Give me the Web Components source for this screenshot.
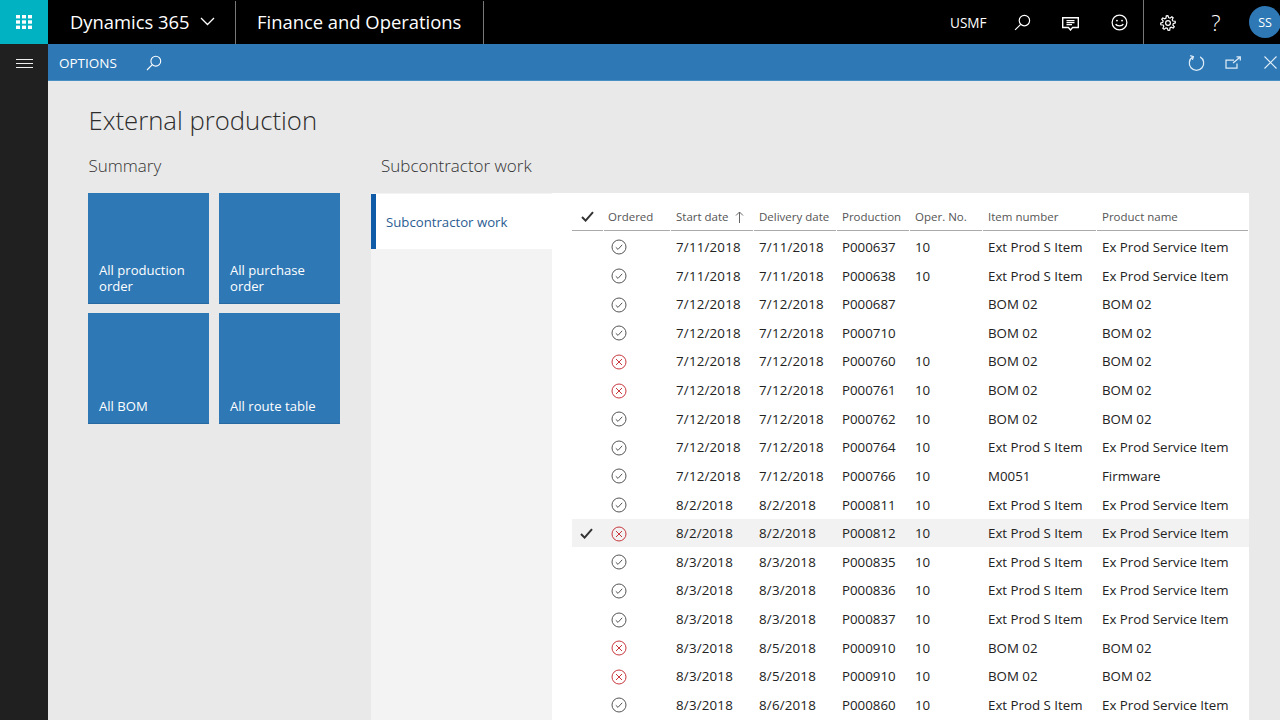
<!DOCTYPE html>
<html lang="en"><head><meta charset="utf-8"><title>External production</title>
<style>
html,body{margin:0;padding:0;height:720px;overflow:hidden;background:#e9e9e9;font-family:"Open Sans","Noto Sans",sans-serif}
</style></head><body>
<d365-app></d365-app>
<script>
const searchIcon=(s,c)=>`<svg width="${s}" height="${s}" viewBox="0 0 16 16" fill="none" stroke="${c}" stroke-width="1.1"><circle cx="9.8" cy="6.2" r="4.9"/><path d="M6.3 9.7 1 15"/></svg>`;
function gearPath(){let d='';const n=8;for(let i=0;i<n;i++){const a=i/n*2*Math.PI-Math.PI/n;const st=2*Math.PI/n;const pts=[[6.6,a],[9.2,a+st*.2],[9.2,a+st*.48],[6.6,a+st*.68]];pts.forEach((p,j)=>{const x=(10+p[0]*Math.cos(p[1])).toFixed(2),y=(10+p[0]*Math.sin(p[1])).toFixed(2);d+=(d?'L':'M')+x+' '+y;});}return d+'Z';}
function def(name,html,init){customElements.define(name,class extends HTMLElement{constructor(){super();this.attachShadow({mode:'open'}).innerHTML=html;}connectedCallback(){if(init)init(this)}});}

def('d365-topbar',`<style>
:host{display:flex;height:44px;background:#000;color:#fff;align-items:stretch;font-size:18.4px}
.tile{width:48px;background:#00b2c2;display:flex;align-items:center;justify-content:center;flex:none}
.seg{display:flex;align-items:center;border-right:1px solid #777;white-space:nowrap;box-sizing:border-box;padding-bottom:2px;margin-top:1px}
.brand{width:188px;padding-left:22px;gap:10px}
.prod{width:248px;padding-left:21px}
.sp{flex:1}
.r{display:flex;align-items:center}
.usmf{font-size:13.6px;width:38px;margin-right:21px;font-weight:400}
.ic{width:48px;height:44px;display:flex;align-items:center;justify-content:center}
.div{width:1px;background:#777;align-self:stretch;margin:0}
.q{font-size:22px;font-weight:300}
.av{width:32px;height:32px;border-radius:50%;background:#2e78b5;font-size:12.5px;display:flex;align-items:center;justify-content:center;margin:0 -1px 0 9px;flex:none}
</style>
<div class="tile"><svg width="16" height="14" viewBox="0 0 16 14" fill="#fff"><rect x="0" y="0" width="4" height="3.4"/><rect x="6" y="0" width="4" height="3.4"/><rect x="12" y="0" width="4" height="3.4"/><rect x="0" y="5.3" width="4" height="3.4"/><rect x="6" y="5.3" width="4" height="3.4"/><rect x="12" y="5.3" width="4" height="3.4"/><rect x="0" y="10.6" width="4" height="3.4"/><rect x="6" y="10.6" width="4" height="3.4"/><rect x="12" y="10.6" width="4" height="3.4"/></svg></div>
<div class="seg brand"><span>Dynamics 365</span><svg width="15" height="9" viewBox="0 0 15 9" fill="none" stroke="#fff" stroke-width="1.3"><path d="M1 1l6.5 6.5L14 1"/></svg></div>
<div class="seg prod"><span>Finance and Operations</span></div>
<div class="sp"></div>
<div class="r"><span class="usmf">USMF</span>
<div class="ic" style="width:26px;margin-right:13px">${searchIcon(17,'#fff')}</div>
<div class="ic" style="width:48px;margin-left:-2px;padding-top:3px"><svg width="17" height="14" viewBox="0 0 17 14" fill="none" stroke="#fff" stroke-width="1.4"><path d="M.7 .7h15.6v9.8H10.6L8.5 13 6.4 10.5H.7z"/><path d="M4.5 3.6h8M4.5 5.6h8M4.5 7.7h5.5" stroke-width="1.2"/></svg></div>
<div class="ic" style="width:48px;margin-left:1px;padding-top:1px"><svg width="17" height="17" viewBox="0 0 18 18" fill="none" stroke="#fff" stroke-width="1.3"><circle cx="9" cy="9" r="7.8"/><circle cx="6.3" cy="7" r="1" fill="#fff" stroke="none"/><circle cx="11.7" cy="7" r="1" fill="#fff" stroke="none"/><path d="M5 10.6c1 2.6 7 2.6 8 0"/></svg></div>
<div class="div"></div>
<div class="ic" style="padding-top:1px"><svg width="16" height="16" viewBox="0 0 20 20" fill="none" stroke="#fff" stroke-width="1.5"><circle cx="10" cy="10" r="3"/><path d="${gearPath()}"/></svg></div>
<div class="ic q">?</div>
<div class="av">SS</div></div>`);

def('d365-actionbar',`<style>
:host{display:flex;height:37px;background:#2e78b5;color:#fff;align-items:center;font-size:13.5px;border-bottom:1px solid #4a8fc4;box-sizing:border-box}
.o{margin-left:11px;width:87px;padding-top:2px}
.sp{flex:1}
.ic{width:37px;display:flex;justify-content:center}
</style>
<span class="o">OPTIONS</span><span style="padding-top:1px;display:flex">${searchIcon(16,'#fff')}</span>
<span class="sp"></span>
<span class="ic" style="margin-right:-1px;padding-left:1px"><svg width="17" height="17" viewBox="0 0 17 17" fill="none" stroke="#dcebf7" stroke-width="1.25"><path d="M4.9 2.9a7.2 7.2 0 1 0 7.2 0"/><path d="M2.2 1.6 5.4 2.7 4.4 5.9"/></svg></span>
<span class="ic" style="width:38px"><svg width="16" height="13" viewBox="0 0 16 13" fill="none" stroke="#dcebf7" stroke-width="1.25"><path d="M9 4H1v8h11V7.5"/><path d="M8 7 15 1.2M11.5 .8h3.8V4.6"/></svg></span>
<span class="ic" style="width:37px;margin-right:-9px"><svg width="13" height="13" viewBox="0 0 13 13" fill="none" stroke="#e6f0f8" stroke-width="1.1"><path d="M.5.5l12 12M12.5.5l-12 12"/></svg></span>`);

def('d365-rail',`<style>
:host{display:flex;flex-direction:column;width:48px;background:#202020;align-items:center;padding-top:15px;box-sizing:border-box;flex:none}
i{display:block;width:17px;height:1px;background:#eee;margin-bottom:3px}
</style><i></i><i></i><i></i>`);

def('d365-tile',`<style>
:host{display:flex;align-items:flex-end;height:110.5px;background:#2e78b5;color:#fff;font-size:13.1px;line-height:16px;padding:0 10px 9px 11px;box-sizing:border-box;border-bottom:1px solid #2769a0}
</style><span><slot></slot></span>`);

def('d365-summary',`<style>
:host{display:block;width:283px;flex:none}
h2{margin:0 0 15px .5px;font:300 17px/24px "Open Sans",sans-serif;color:#333}
.g{display:grid;grid-template-columns:121px 121px;gap:9.5px 10px}
</style><h2>Summary</h2><div class="g"><slot></slot></div>`);

const OK=`<svg width="16" height="16" viewBox="0 0 16 16" fill="none" stroke="#555" stroke-width="1"><circle cx="8" cy="8" r="7"/><path d="M4.8 8.3l2.2 2.1 4.2-4.6"/></svg>`;
const NO=`<svg width="16" height="16" viewBox="0 0 16 16" fill="none" stroke="#c8383f" stroke-width="1"><circle cx="8" cy="8" r="7"/><path d="M5 5l6 6M11 5l-6 6"/></svg>`;
const CK=`<svg width="13" height="11" viewBox="0 0 13 11" fill="none" stroke="#333" stroke-width="2"><path d="M1 6l3.6 3.6L12 1.2"/></svg>`;
const E=['Ext Prod S Item','Ex Prod Service Item'],B=['BOM 02','BOM 02'];
const rows=[
[1,'7/11/2018','7/11/2018','P000637','10',E],[1,'7/11/2018','7/11/2018','P000638','10',E],
[1,'7/12/2018','7/12/2018','P000687','',B],[1,'7/12/2018','7/12/2018','P000710','',B],
[0,'7/12/2018','7/12/2018','P000760','10',B],[0,'7/12/2018','7/12/2018','P000761','10',B],
[1,'7/12/2018','7/12/2018','P000762','10',B],[1,'7/12/2018','7/12/2018','P000764','10',E],
[1,'7/12/2018','7/12/2018','P000766','10',['M0051','Firmware']],[1,'8/2/2018','8/2/2018','P000811','10',E],
[0,'8/2/2018','8/2/2018','P000812','10',E,1],[1,'8/3/2018','8/3/2018','P000835','10',E],
[1,'8/3/2018','8/3/2018','P000836','10',E],[1,'8/3/2018','8/3/2018','P000837','10',E],
[0,'8/3/2018','8/5/2018','P000910','10',B],[0,'8/3/2018','8/5/2018','P000910','10',B],
[1,'8/3/2018','8/6/2018','P000860','10',E]];
const cols='31.5px 67px 83px 83px 73px 73px 114px 152.5px';
def('d365-grid',`<style>
:host{display:block;background:#fff;flex:1;padding:0 0 0 20px;overflow:hidden}
.r{display:grid;grid-template-columns:${cols};height:28.63px;align-items:center;font-size:13.3px;color:#222;white-space:nowrap}
.r.sel{background:#f2f2f2}
.r span{padding-left:5.5px;display:flex;align-items:center;height:100%}
.r span.c{padding:0 0 0 8px}
.r span.n{letter-spacing:.2px}
.h{height:38px;color:#555;font-size:11.5px;margin-bottom:1.6px}
.h span{height:auto;align-self:stretch;box-sizing:border-box;border-bottom:1px solid #aaa;margin-right:1px;padding-top:10px}
.h span.c{padding:10px 0 0 9px}
.h span.o{padding-left:4.5px}
.a{margin-left:6px}
.ic{padding-left:7px!important;padding-top:1px}
</style><div class="h r"><span class="c">${CK}</span><span class="o">Ordered</span><span>Start date<svg class="a" width="9" height="12" viewBox="0 0 9 12" fill="none" stroke="#666" stroke-width="1"><path d="M4.5 12V1M1 4.5 4.5 1 8 4.5"/></svg></span><span>Delivery date</span><span>Production</span><span>Oper. No.</span><span>Item number</span><span>Product name</span></div>
<div id="b"></div>`,el=>{
el.shadowRoot.getElementById('b').innerHTML=rows.map(r=>`<div class="r${r[6]?' sel':''}"><span class="c">${r[6]?CK:''}</span><span class="ic">${r[0]?OK:NO}</span><span class="n">${r[1]}</span><span class="n">${r[2]}</span><span>${r[3]}</span><span>${r[4]}</span><span>${r[5][0]}</span><span>${r[5][1]}</span></div>`).join('');
});

def('d365-work',`<style>
:host{display:flex;flex-direction:column;flex:1;min-width:0}
h2{margin:0 0 15px 10px;font:300 17px/24px "Open Sans",sans-serif;color:#333}
.b{display:flex;flex:1;min-height:0;margin-right:31px}
.tabs{width:181px;background:#f3f3f3;flex:none;padding-top:1px}
.t{height:55px;background:#fff;border-left:5px solid #0f5ba8;box-sizing:border-box;display:flex;align-items:center;padding-left:10px;font-size:13.2px;color:#2b5d93}
</style><h2>Subcontractor work</h2><div class="b"><div class="tabs"><div class="t">Subcontractor work</div></div><d365-grid></d365-grid></div>`);

def('d365-app',`<style>
:host{display:flex;flex-direction:column;height:720px;overflow:hidden}
.m{display:flex;flex:1;min-height:0}
.c{flex:1;display:flex;flex-direction:column;min-width:0}
.p{flex:1;display:flex;flex-direction:column;padding:0 0 0 40px;min-height:0}
h1{margin:22px 0 15px .5px;font:300 25.7px/36px "Open Sans",sans-serif;color:#2d2d2d}
.cols{display:flex;flex:1;min-height:0}
</style><d365-topbar></d365-topbar><div class="m"><d365-rail></d365-rail><div class="c"><d365-actionbar></d365-actionbar><div class="p"><h1>External production</h1><div class="cols"><d365-summary><d365-tile>All production order</d365-tile><d365-tile>All purchase order</d365-tile><d365-tile>All BOM</d365-tile><d365-tile>All route table</d365-tile></d365-summary><d365-work></d365-work></div></div></div></div>`);
</script></body></html>
